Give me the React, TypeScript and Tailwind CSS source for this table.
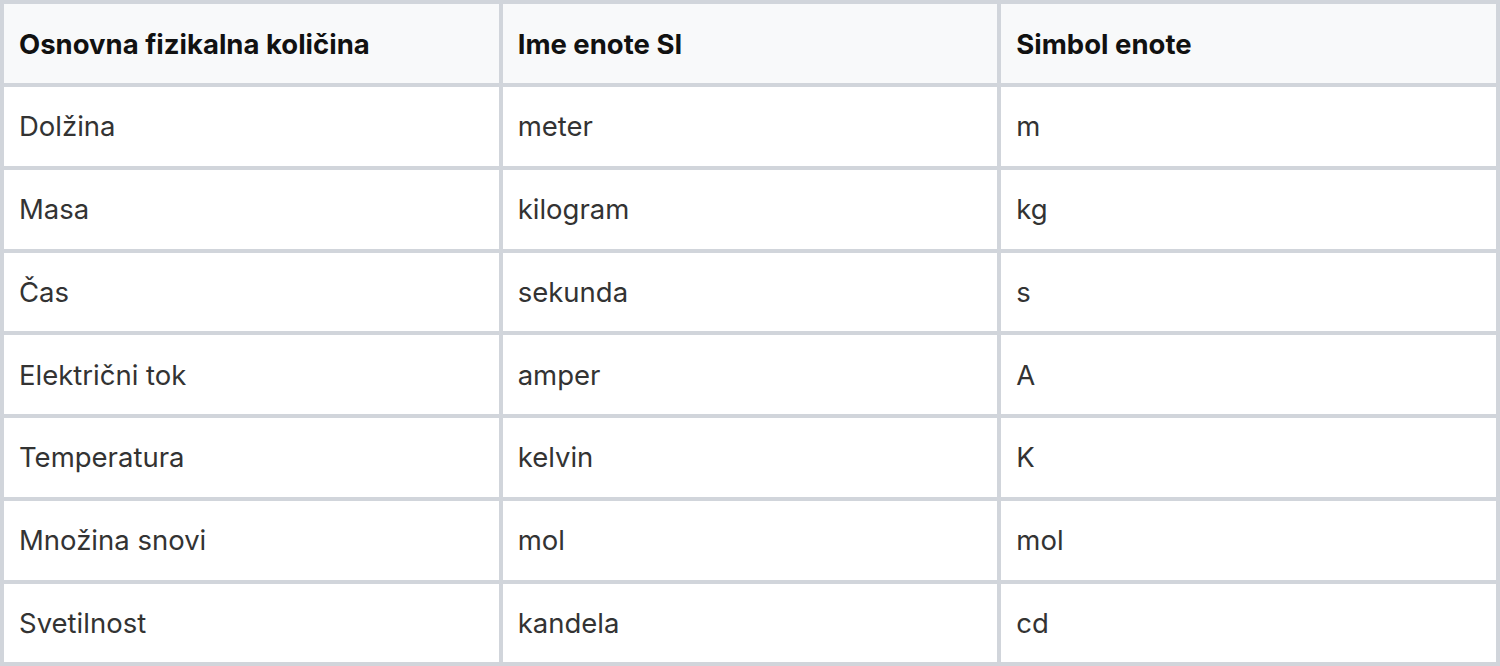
const rows: [string, string, string][] = [
  ["Dolžina", "meter", "m"],
  ["Masa", "kilogram", "kg"],
  ["Čas", "sekunda", "s"],
  ["Električni tok", "amper", "A"],
  ["Temperatura", "kelvin", "K"],
  ["Množina snovi", "mol", "mol"],
  ["Svetilnost", "kandela", "cd"],
];

const headers = ["Osnovna fizikalna količina", "Ime enote SI", "Simbol enote"];

export default function App() {
  return (
    <div className="w-[1500px] h-[666px] bg-white font-['Inter','Liberation_Sans',sans-serif]">
      <table className="w-full h-full table-fixed border-separate border-spacing-1 bg-[#d1d5db] text-[27.5px] leading-[34px]">
        <colgroup>
          <col className="w-1/3" />
          <col className="w-1/3" />
          <col className="w-1/3" />
        </colgroup>
        <thead>
          <tr className="h-[79px]">
            {headers.map((h) => (
              <th key={h} className="bg-[#f8f9fa] px-[15px] text-left align-middle font-bold text-[#111111]">
                {h}
              </th>
            ))}
          </tr>
        </thead>
        <tbody>
          {rows.map((row, i) => (
            <tr key={i} className="h-[78.75px]">
              {row.map((cell, j) => (
                <td key={j} className="bg-white px-[15px] align-middle text-[#333333]">
                  {cell}
                </td>
              ))}
            </tr>
          ))}
        </tbody>
      </table>
    </div>
  );
}
